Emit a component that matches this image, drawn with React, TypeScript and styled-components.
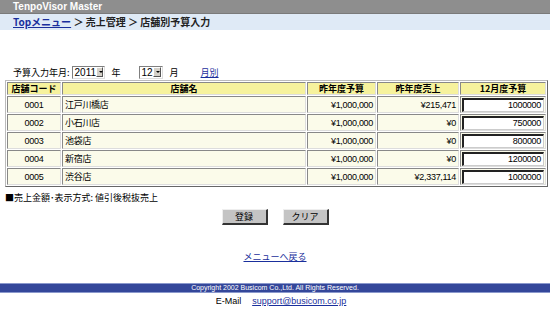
import React from "react";
import styled, { createGlobalStyle } from "styled-components";

const GlobalStyle = createGlobalStyle`
  html, body { margin: 0; padding: 0; background: #ffffff; }
  body { font-family: "Noto Sans CJK JP", "DejaVu Sans", sans-serif; color: #000; }
`;

const Page = styled.div`
  width: 550px;
  height: 318px;
  display: flex;
  flex-direction: column;
  overflow: hidden;
`;

const TitleBar = styled.div`
  height: 13px;
  background: #8e8e8e;
  border-bottom: 1px solid #7a7a7a;
  color: #fff;
  font-family: "Liberation Sans", Arial, sans-serif;
  font-weight: bold;
  font-size: 10px;
  line-height: 13px;
  padding-left: 13px;
`;

const Crumbs = styled.div`
  height: 16px;
  background: #dfeaf6;
  font-size: 10px;
  font-weight: bold;
  line-height: 16px;
  padding-left: 13px;
  color: #222;
  white-space: pre;
`;

const Link = styled.a<{ $bold?: boolean }>`
  color: #1a2f9c;
  text-decoration: underline;
  font-weight: ${(p) => (p.$bold ? "bold" : "normal")};
`;

const FormRow = styled.div`
  display: flex;
  align-items: center;
  height: 16px;
  margin: 34px 0 0 13px;
  font-size: 9px;
`;

const Select = styled.div<{ $w: number }>`
  width: ${(p) => p.$w}px;
  height: 13px;
  border: 1px solid #7f7f7f;
  border-right-color: #ddd;
  border-bottom-color: #ddd;
  display: flex;
  align-items: center;
  justify-content: space-between;
  box-sizing: border-box;
  font-family: "Liberation Sans", Arial, sans-serif;
  font-size: 10px;
  padding-left: 2px;
  margin: 0 7px 0 2px;
  background: #fff;
`;

const Arrow = styled.span`
  width: 10px;
  height: 10px;
  margin-right: 1px;
  background: #d4d0c8;
  border: 1px solid #fff;
  border-right-color: #555;
  border-bottom-color: #555;
  box-sizing: border-box;
  position: relative;
  &::after {
    content: "";
    position: absolute;
    left: 2px;
    top: 3px;
    border-left: 2px solid transparent;
    border-right: 2px solid transparent;
    border-top: 2px solid #000;
  }
`;

const Gap = styled.span<{ $w: number }>`
  display: inline-block;
  width: ${(p) => p.$w}px;
`;

const Table = styled.table`
  margin: 0 0 0 5px;
  width: 540px;
  table-layout: fixed;
  border-collapse: separate;
  border-spacing: 1px;
  border: 1px solid #bbb;
  border-right-color: #666;
  border-bottom-color: #666;
  font-size: 9px;
`;

const Th = styled.th<{ $w: number }>`
  width: ${(p) => p.$w}px;
  height: 11px;
  padding: 0;
  background: #f6f29d;
  border: 1px solid #888;
  border-right-color: #ddd;
  border-bottom-color: #ddd;
  font-weight: bold;
  line-height: 11px;
  text-align: center;
`;

const Td = styled.td<{ $align?: string }>`
  height: 15px;
  padding: 0 2px;
  background: #fbfbea;
  border: 1px solid #888;
  border-right-color: #ddd;
  border-bottom-color: #ddd;
  text-align: ${(p) => p.$align || "left"};
  font-family: "Liberation Sans", Arial, "Noto Sans CJK JP", sans-serif;
  font-size: 9px;
  letter-spacing: -0.3px;
  white-space: nowrap;
`;

const InputCell = styled.td`
  padding: 0 1px;
  background: #fbfbea;
  border: 1px solid #888;
  border-right-color: #ddd;
  border-bottom-color: #ddd;
`;

const Amount = styled.div`
  height: 14px;
  box-sizing: border-box;
  border: 2px solid #222;
  border-right: 1px solid #ccc;
  border-bottom: 1px solid #ccc;
  background: #fff;
  text-align: right;
  font-family: "Liberation Sans", Arial, sans-serif;
  font-size: 9px;
  line-height: 11px;
  padding-right: 2px;
  letter-spacing: -0.3px;
`;

const Note = styled.div`
  margin: 5px 0 0 5px;
  font-size: 9px;
  line-height: 12px;
`;

const Buttons = styled.div`
  display: flex;
  justify-content: center;
  gap: 15px;
  margin-top: 5px;
`;

const Button = styled.div`
  width: 46px;
  height: 16px;
  box-sizing: border-box;
  background: #c4c4c4;
  border: 1px solid #eee;
  border-right: 2px solid #333;
  border-bottom: 2px solid #333;
  font-size: 9px;
  line-height: 13px;
  text-align: center;
`;

const Back = styled.div`
  margin-top: 26px;
  text-align: center;
  font-size: 9px;
  line-height: 12px;
`;

const Footer = styled.div`
  margin-top: 20px;
  height: 8px;
  background: #34479a;
  border-top: 1px solid #8a98cc;
  border-bottom: 1px solid #8a98cc;
  color: #fff;
  font-family: "Liberation Sans", Arial, sans-serif;
  font-size: 7px;
  line-height: 8px;
  text-align: center;
`;

const Mail = styled.div`
  margin-top: 3px;
  display: flex;
  justify-content: center;
  gap: 11px;
  font-family: "Liberation Sans", Arial, sans-serif;
  font-size: 9px;
  line-height: 11px;
  padding-left: 12px;
`;

const rows = [
  { code: "0001", name: "江戸川橋店", prev: "¥1,000,000", sales: "¥215,471", budget: "1000000" },
  { code: "0002", name: "小石川店", prev: "¥1,000,000", sales: "¥0", budget: "750000" },
  { code: "0003", name: "池袋店", prev: "¥1,000,000", sales: "¥0", budget: "800000" },
  { code: "0004", name: "新宿店", prev: "¥1,000,000", sales: "¥0", budget: "1200000" },
  { code: "0005", name: "渋谷店", prev: "¥1,000,000", sales: "¥2,337,114", budget: "1000000" },
];

export default function App() {
  return (
    <Page>
      <GlobalStyle />
      <TitleBar>TenpoVisor Master</TitleBar>
      <Crumbs>
        <Link $bold>Topメニュー</Link>{" ＞ 売上管理 ＞ 店舗別予算入力"}
      </Crumbs>

      <FormRow>
        予算入力年月:
        <Select $w={33}>
          2011<Arrow />
        </Select>
        年<Gap $w={16} />
        <Select $w={24}>
          12<Arrow />
        </Select>
        月<Gap $w={22} />
        <Link>月別</Link>
      </FormRow>

      <Table>
        <thead>
          <tr>
            <Th $w={52}>店舗コード</Th>
            <Th $w={242}>店舗名</Th>
            <Th $w={67}>昨年度予算</Th>
            <Th $w={80}>昨年度売上</Th>
            <Th $w={84}>12月度予算</Th>
          </tr>
        </thead>
        <tbody>
          {rows.map((r) => (
            <tr key={r.code}>
              <Td $align="center">{r.code}</Td>
              <Td>{r.name}</Td>
              <Td $align="right">{r.prev}</Td>
              <Td $align="right">{r.sales}</Td>
              <InputCell>
                <Amount>{r.budget}</Amount>
              </InputCell>
            </tr>
          ))}
        </tbody>
      </Table>

      <Note>■売上金額･表示方式: 値引後税抜売上</Note>

      <Buttons>
        <Button>登録</Button>
        <Button>クリア</Button>
      </Buttons>

      <Back>
        <Link>メニューへ戻る</Link>
      </Back>

      <Footer>Copyright 2002 Busicom Co.,Ltd. All Rights Reserved.</Footer>
      <Mail>
        <span>E-Mail</span>
        <Link>support@busicom.co.jp</Link>
      </Mail>
    </Page>
  );
}
